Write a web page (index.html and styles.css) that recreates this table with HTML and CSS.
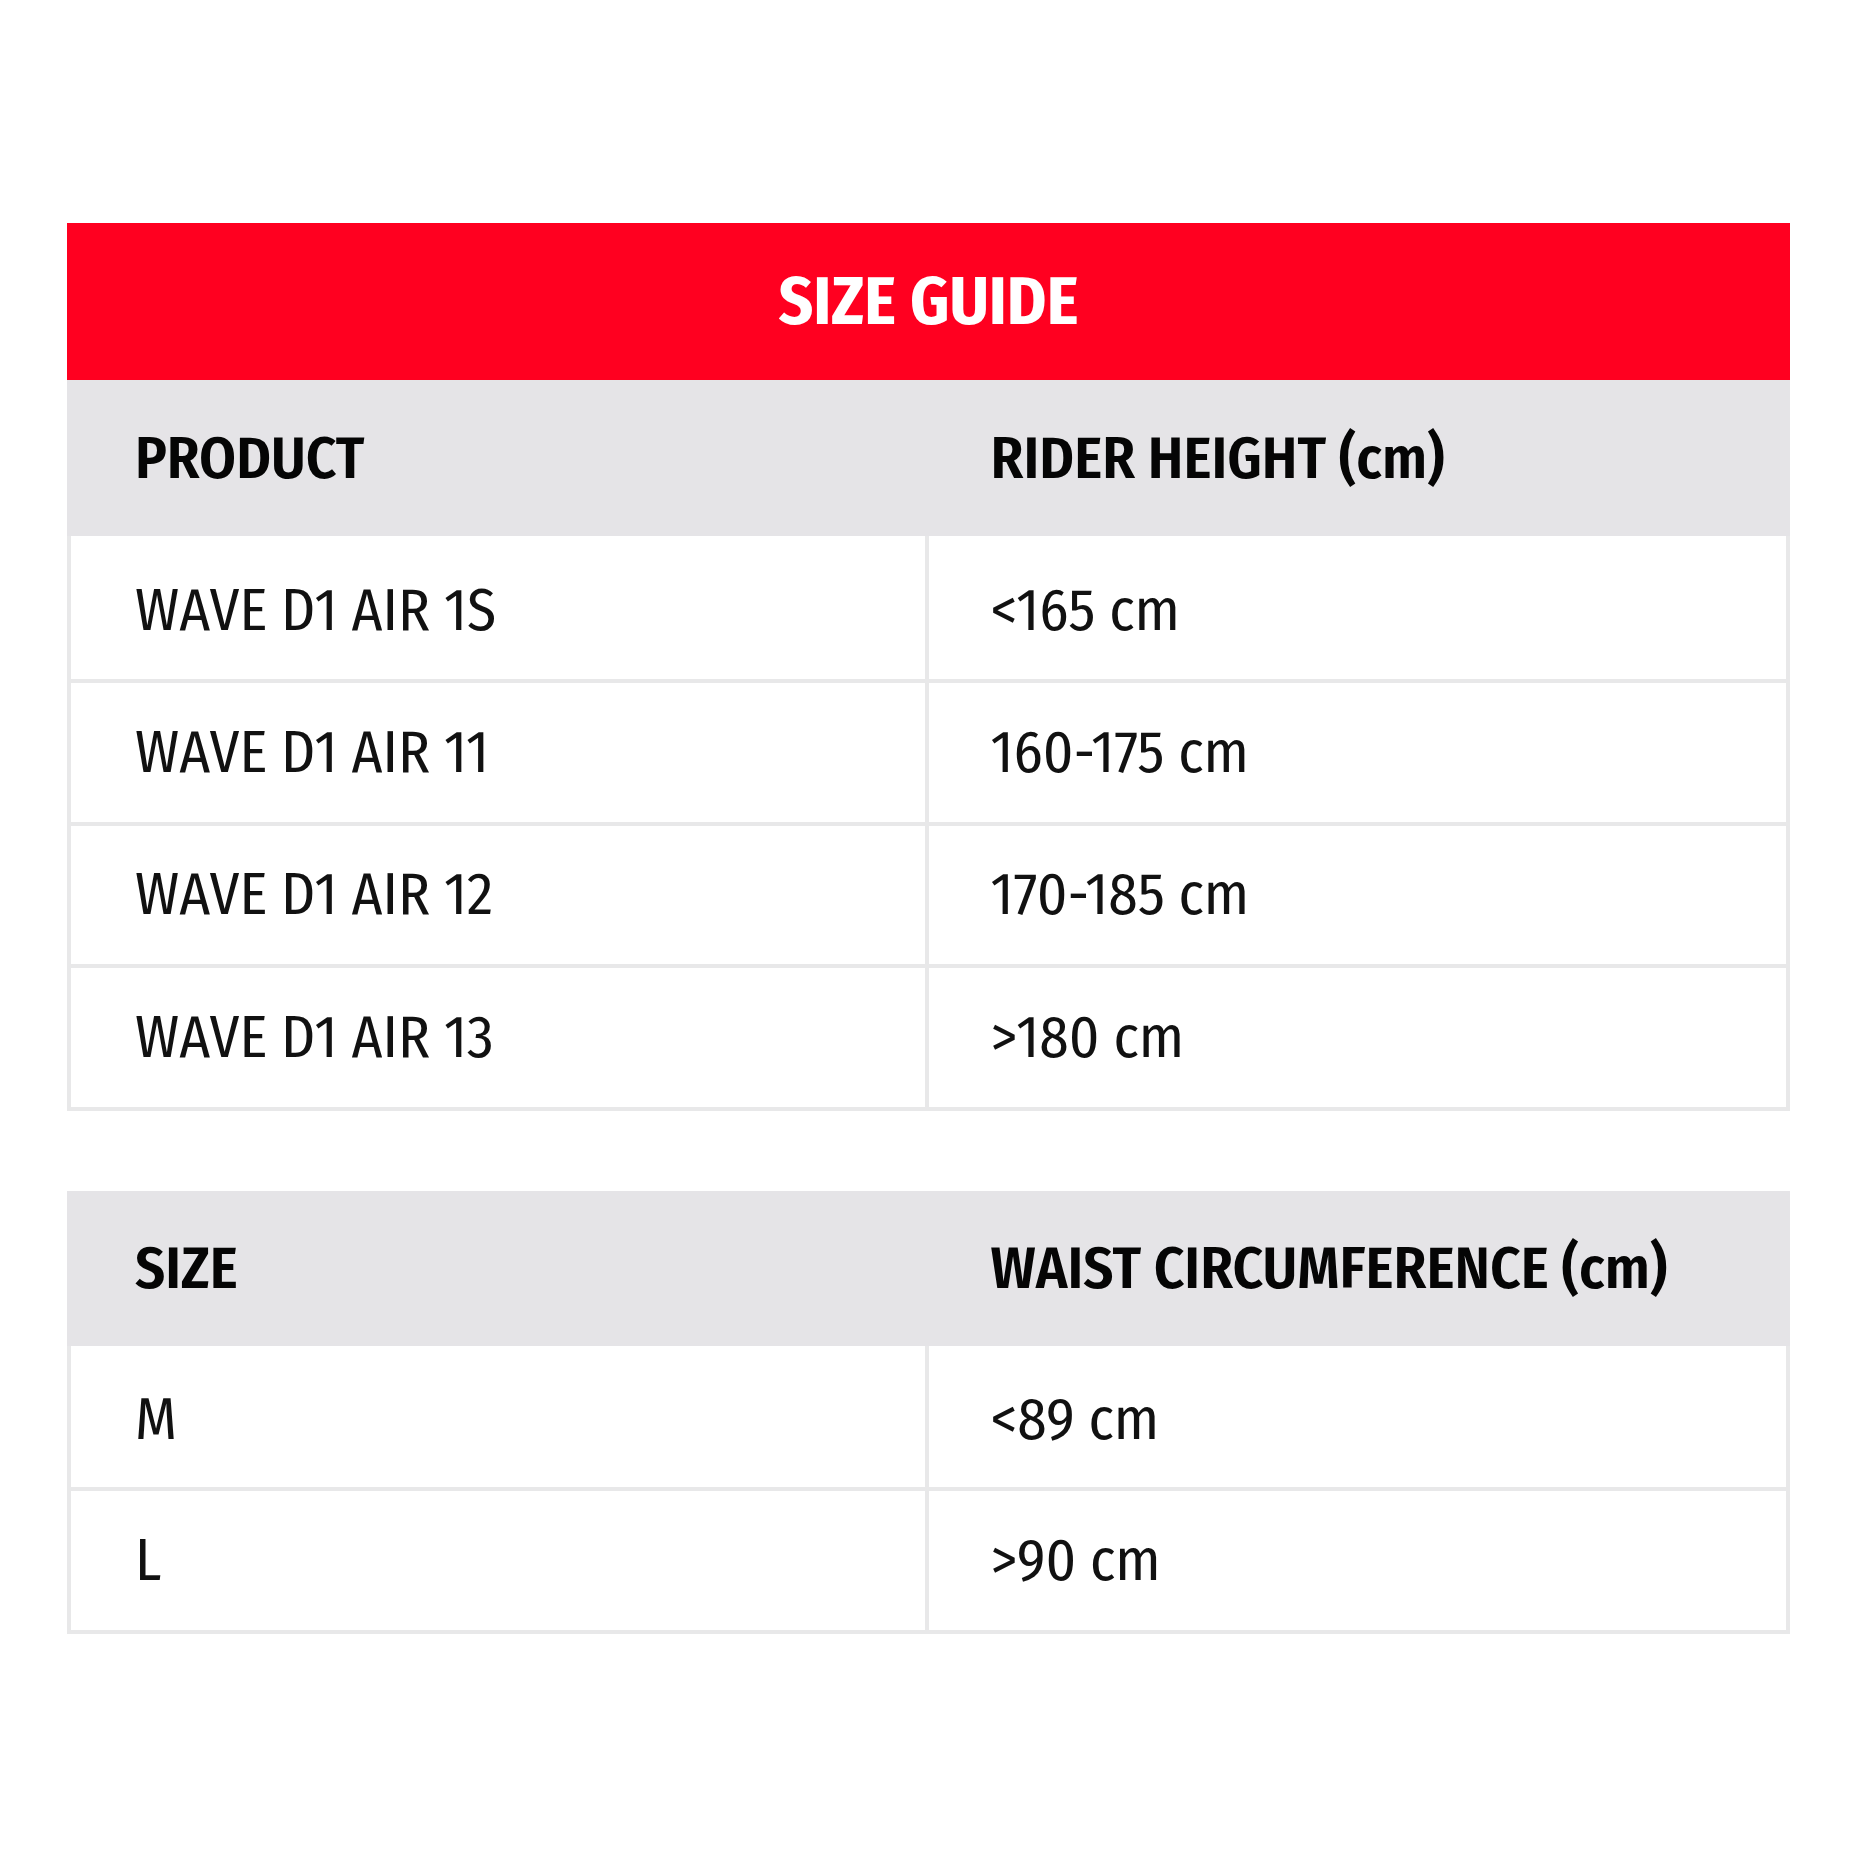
FILE: index.html
```html
<!DOCTYPE html>
<html lang="en">
<head>
<meta charset="utf-8">
<title>Size Guide</title>
<link rel="stylesheet" href="styles.css">
</head>
<body>
<main class="page">
  <section class="guide">
    <h1 class="title">SIZE GUIDE</h1>
    <div class="row head">
      <div class="cell">PRODUCT</div>
      <div class="cell">RIDER HEIGHT (cm)</div>
    </div>
    <div class="row">
      <div class="cell">WAVE D1 AIR 1S</div>
      <div class="cell">&lt;165 cm</div>
    </div>
    <div class="row">
      <div class="cell">WAVE D1 AIR 11</div>
      <div class="cell">160-175 cm</div>
    </div>
    <div class="row">
      <div class="cell">WAVE D1 AIR 12</div>
      <div class="cell">170-185 cm</div>
    </div>
    <div class="row">
      <div class="cell">WAVE D1 AIR 13</div>
      <div class="cell">&gt;180 cm</div>
    </div>
  </section>
  <section class="guide second">
    <div class="row head">
      <div class="cell">SIZE</div>
      <div class="cell">WAIST CIRCUMFERENCE (cm)</div>
    </div>
    <div class="row">
      <div class="cell">M</div>
      <div class="cell">&lt;89 cm</div>
    </div>
    <div class="row">
      <div class="cell">L</div>
      <div class="cell">&gt;90 cm</div>
    </div>
  </section>
</main>
</body>
</html>
```
FILE: styles.css
```css
html, body {
  margin: 0;
  background: #ffffff;
}
body {
  font-family: "Fira Sans Condensed", "Roboto Condensed", "Open Sans", sans-serif;
  color: #111111;
}
.page {
  padding: 223px 70px 0 67px;
}
.guide {
  display: flex;
  flex-direction: column;
}
.second {
  margin-top: 80.5px;
}
.title {
  margin: 0;
  height: 157px;
  background: #ff0020;
  color: #ffffff;
  font-size: 67px;
  font-weight: 700;
  display: flex;
  align-items: center;
  justify-content: center;
  letter-spacing: 0;
}
.row {
  display: grid;
  grid-template-columns: 1fr 1fr;
  height: 142.5px;
  box-sizing: border-box;
  border-left: 4px solid #e8e8e9;
  border-right: 4px solid #e8e8e9;
  border-bottom: 4px solid #e8e8e9;
  font-size: 59px;
  font-weight: 400;
}
.row.head {
  height: 156px;
  background: #e5e4e7;
  border-color: transparent;
  border-bottom-width: 0;
  font-weight: 600;
  color: #050505;
}
.head + .row {
  height: 147px;
}
.head + .row .cell {
  padding-top: 5px;
}
.second .row.head {
  height: 155px;
}
.second .head + .row {
  height: 145px;
}
.cell {
  display: flex;
  align-items: center;
  padding-left: 64px;
}
.cell:first-child {
  border-right: 4px solid #e8e8e9;
}
.row.head .cell:first-child {
  border-right-color: transparent;
}
.cell + .cell {
  padding-left: 62px;
}
```
